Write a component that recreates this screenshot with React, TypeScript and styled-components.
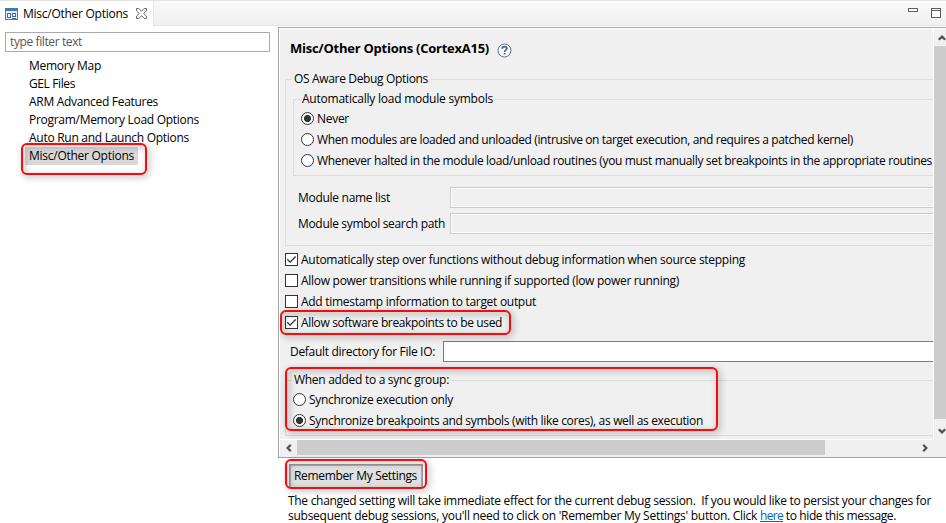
import React, { useLayoutEffect, useRef } from 'react';
import styled, { createGlobalStyle } from 'styled-components';

const GlobalStyle = createGlobalStyle`
  * { box-sizing: border-box; }
  body {
    margin: 0;
    background: #fff;
    color: #000;
    overflow: hidden;
    font: 12px/18px 'Open Sans', 'Noto Sans', sans-serif;
  }
`;

/* ---------- text ---------- */

const TextSpan = styled.span<{ $width: number; $tone?: string }>`
  display: inline-block;
  flex: none;
  width: ${(p) => p.$width}px;
  white-space: pre;
  color: ${(p) => p.$tone ?? 'inherit'};
`;

/* Tracks its glyphs so that the label fills exactly the given advance width. */
function Text({ width, tone, children }: { width: number; tone?: string; children: string }) {
  const ref = useRef<HTMLSpanElement>(null);
  useLayoutEffect(() => {
    const el = ref.current;
    if (!el) return;
    el.style.letterSpacing = '0px';
    const range = document.createRange();
    range.selectNodeContents(el);
    const natural = range.getBoundingClientRect().width;
    el.style.letterSpacing = `${(width - natural) / children.length}px`;
  }, [width, children]);
  return (
    <TextSpan ref={ref} $width={width} $tone={tone}>
      {children}
    </TextSpan>
  );
}

/* ---------- window frame ---------- */

const Window = styled.div`
  width: 946px;
  height: 523px;
  display: flex;
  flex-direction: column;
  overflow: hidden;
  background: #fff;
`;

const TabBar = styled.header`
  flex: none;
  height: 26px;
  display: flex;
  border-top: 1px solid #e4e4e4;
`;

const Tab = styled.div`
  width: 153px;
  display: flex;
  align-items: center;
  padding: 0 0 0 5px;
  background: #fff;
  svg { flex: none; display: block; }
`;

const TabLabel = styled.div`
  margin: 0 8px 0 5px;
`;

const TabFill = styled.div`
  flex: 1;
  display: flex;
  justify-content: flex-end;
  align-items: flex-start;
  gap: 12px;
  padding: 6px 4px 0 0;
  border-left: 1px solid #e4e4e4;
  border-bottom: 1px solid #e4e4e4;
  background: linear-gradient(#fafafa, #f0f0f0);
`;

const Body = styled.div`
  flex: 1;
  display: flex;
  min-height: 0;
`;

/* ---------- sidebar ---------- */

const Sidebar = styled.aside`
  flex: none;
  width: 278px;
  padding: 6px 0 0 5px;
`;

const FilterBox = styled.div`
  width: 265px;
  height: 20px;
  padding-left: 4px;
  border: 1px solid #a9a9ae;
  display: flex;
  align-items: center;
`;

const Tree = styled.ul`
  list-style: none;
  margin: 5px 0 0 20px;
  padding: 0;
`;

const TreeItem = styled.li<{ $selected?: boolean }>`
  position: relative;
  width: max-content;
  height: 18px;
  padding: 0 4px;
  background: ${(p) => (p.$selected ? '#d9d9d9' : 'transparent')};
`;

const Callout = styled.div<{ $left: number; $top: number; $width: number; $height: number }>`
  position: absolute;
  z-index: 2;
  left: ${(p) => p.$left}px;
  top: ${(p) => p.$top}px;
  width: ${(p) => p.$width}px;
  height: ${(p) => p.$height}px;
  border: 2px solid #fa0a0a;
  border-radius: 6px;
  filter: drop-shadow(2px 2px 3px rgba(0, 0, 0, 0.45));
  pointer-events: none;
`;

/* ---------- main column ---------- */

const Main = styled.main`
  flex: 1;
  min-width: 0;
  padding-top: 1px;
`;

const Panel = styled.section`
  height: 431px;
  border: 1px solid #a3a3a7;
  border-right: 0;
  display: grid;
  grid-template: 411px 16px / 655px 12px;
  background: #f0f0f0;
  padding-bottom: 2px;
`;

const Viewport = styled.div`
  overflow: hidden;
  border: 1px solid #fff;
  border-width: 1px 1px 0 1px;
`;

const Form = styled.div`
  width: 760px;
  padding-left: 5px;
`;

const TitleRow = styled.h1`
  margin: 0;
  height: 41px;
  display: flex;
  padding: 10px 0 0 5px;
  font-size: 13px;
  font-weight: 700;
  svg { margin: 4px 0 0 8px; }
`;

const Group = styled.fieldset<{ $height: number; $gap?: number }>`
  min-width: 0;
  width: 740px;
  height: ${(p) => p.$height}px;
  margin: ${(p) => p.$gap ?? 0}px 0 0;
  padding: 0 0 0 7px;
  border: 1px solid #dcdcdc;
`;

const GroupLabel = styled.legend`
  margin-left: -1px;
  padding: 0 2px;
  height: 18px;
`;

const OptionRow = styled.div`
  position: relative;
  height: 21px;
  display: flex;
  align-items: center;
`;

const OptionList = styled.div<{ $top: number }>`
  margin-top: ${(p) => p.$top}px;
`;

const RadioDot = styled.span<{ $on?: boolean }>`
  flex: none;
  width: 13px;
  height: 13px;
  margin-right: 3px;
  border: 1px solid #333;
  border-radius: 50%;
  background: ${(p) => (p.$on ? 'radial-gradient(circle, #333 3.2px, #fff 3.9px)' : '#fff')};
`;

const Box = styled.span`
  flex: none;
  width: 13px;
  height: 13px;
  margin-right: 3px;
  border: 1px solid #333;
  background: #fff;
  svg { display: block; }
`;

const FieldRow = styled.div<{ $gap: number; $indent: number }>`
  height: 21px;
  margin-top: ${(p) => p.$gap}px;
  padding-left: ${(p) => p.$indent}px;
  display: flex;
  align-items: center;
`;

const FieldLabel = styled.div<{ $width: number }>`
  flex: none;
  width: ${(p) => p.$width}px;
`;

const FieldInput = styled.div<{ $disabled?: boolean }>`
  flex: 1;
  height: 21px;
  border: 1px solid ${(p) => (p.$disabled ? '#cbcbcb' : '#7a7a7a')};
  background: ${(p) => (p.$disabled ? '#f0f0f0' : '#fff')};
  box-shadow: inset 0 0 0 1px #fff;
`;

const SyncArea = styled.div`
  position: relative;
  margin-top: 9px;
`;

/* ---------- scroll bars ---------- */

const VScroll = styled.div`
  height: 414px;
  display: flex;
  flex-direction: column;
  border-top: 1px solid #fff;
`;

const HScroll = styled.div`
  display: flex;
  width: 654px;
  border-top: 1px solid #fff;
  border-left: 1px solid #fff;
`;

const ScrollArrow = styled.div<{ $w: number; $h: number }>`
  flex: none;
  width: ${(p) => p.$w}px;
  height: ${(p) => p.$h}px;
  display: flex;
  align-items: center;
  justify-content: center;
  svg { flex: none; }
`;

const VThumb = styled.div`
  flex: none;
  height: 373px;
  background: #cdcdcd;
`;

const HThumb = styled.div`
  width: 528px;
  height: 15px;
  margin-right: auto;
  background: #cdcdcd;
`;

/* ---------- footer ---------- */

const Footer = styled.footer`
  padding: 6px 0 0 10px;
`;

const ButtonWrap = styled.div`
  position: relative;
  width: 136px;
  height: 23px;
  margin-left: 1px;
`;

const Button = styled.button`
  display: flex;
  width: 134px;
  height: 23px;
  padding: 2px 0 0 4px;
  border: 1px solid #9b9b9b;
  border-bottom: 0;
  border-radius: 0;
  background: #e1e1e1;
  box-shadow: inset 1px 1px 0 #adadad, inset -1px 0 0 #adadad;
  color: #000;
  font: inherit;
`;

const Message = styled.div`
  margin-top: 6px;
  line-height: 15px;
`;

const MessageLine = styled.div`
  display: flex;
  height: 15px;
`;

const Link = styled.a`
  color: #0066cc;
  display: flex;
  text-decoration: none;
  height: 14px;
  border-bottom: 1px solid #0066cc;
`;

/* ---------- drawings ---------- */

const TabIcon = () => (
  <svg width="13" height="12" shapeRendering="crispEdges">
    <rect width="13" height="12" fill="#4a78b0" />
    <rect x="1" y="1" width="11" height="2" fill="#3f78bd" />
    <rect x="1" y="3" width="11" height="8" fill="#e4effa" />
    <path d="M2.5 5.5h3v4h-3zM7.5 5.5h3v3h-3zM7 10.5h4" fill="#fff" stroke="#3c6aa3" />
  </svg>
);

const CloseIcon = () => (
  <svg width="11" height="11" viewBox="0 0 11 11">
    <path
      d="M.5.5h2.3l2.7 2.8L8.2.5h2.3v2.3L7.7 5.5l2.8 2.7v2.3H8.2L5.5 7.7l-2.7 2.8H.5V8.2l2.8-2.7L.5 2.8z"
      fill="#fff"
      stroke="#666"
    />
  </svg>
);

const HelpIcon = () => (
  <svg width="15" height="15" viewBox="0 0 15 15">
    <circle cx="7.5" cy="7.5" r="6.5" fill="#fbfcfe" stroke="#5b6f92" />
    <path
      d="M5.2 5.8C5.2 4.3 6.1 3.7 7.5 3.7s2.3.7 2.3 1.9c0 1.6-2.2 1.5-2.2 3.3M7.6 10v1.6"
      fill="none"
      stroke="#4a5f88"
      strokeWidth="1.8"
    />
  </svg>
);

const MinimizeIcon = () => (
  <svg width="11" height="11" shapeRendering="crispEdges">
    <rect x=".5" y="1.5" width="9" height="3" fill="#fff" stroke="#5f5f5f" />
  </svg>
);

const MaximizeIcon = () => (
  <svg width="11" height="11" shapeRendering="crispEdges">
    <path d="M.5 1.5h9v9h-9zM.5 3.5h9" fill="#fff" stroke="#5f5f5f" />
  </svg>
);

const CHEVRONS = {
  up: 'M.8 5.8L4 2.6l3.2 3.2',
  down: 'M.8 2.2L4 5.4l3.2-3.2',
  left: 'M5.8.8L2.6 4l3.2 3.2',
  right: 'M2.2.8L5.4 4 2.2 7.2',
};

const Chevron = ({ dir }: { dir: keyof typeof CHEVRONS }) => (
  <svg width="8" height="8" viewBox="0 0 8 8">
    <path d={CHEVRONS[dir]} fill="none" stroke="#505050" strokeWidth="2.2" />
  </svg>
);

/* ---------- composed controls ---------- */

type OptionProps = { on?: boolean; width: number; label: string; children?: React.ReactNode };

const Radio = ({ on, width, label }: OptionProps) => (
  <OptionRow>
    <RadioDot $on={on} />
    <Text width={width}>{label}</Text>
  </OptionRow>
);

const Checkbox = ({ on, width, label, children }: OptionProps) => (
  <OptionRow>
    <Box>
      {on && (
        <svg width="11" height="11" viewBox="0 0 11 11">
          <path d="M1.3 5.3l2.8 2.8 5.5-5.6" fill="none" stroke="#333" strokeWidth="1.3" />
        </svg>
      )}
    </Box>
    <Text width={width}>{label}</Text>
    {children}
  </OptionRow>
);

const PAGES: [string, number][] = [
  ['Memory Map', 72],
  ['GEL Files', 46],
  ['ARM Advanced Features', 129],
  ['Program/Memory Load Options', 170],
  ['Auto Run and Launch Options', 160],
];

export default function App() {
  return (
    <Window>
      <GlobalStyle />
      <TabBar>
        <Tab>
          <TabIcon />
          <TabLabel>
            <Text width={105}>Misc/Other Options</Text>
          </TabLabel>
          <CloseIcon />
        </Tab>
        <TabFill>
          <MinimizeIcon />
          <MaximizeIcon />
        </TabFill>
      </TabBar>
      <Body>
        <Sidebar>
          <FilterBox>
            <Text width={72} tone="#555">type filter text</Text>
          </FilterBox>
          <Tree>
            {PAGES.map(([label, width]) => (
              <TreeItem key={label}>
                <Text width={width}>{label}</Text>
              </TreeItem>
            ))}
            <TreeItem $selected>
              <Text width={105}>Misc/Other Options</Text>
              <Callout $left={-4} $top={-4} $width={126} $height={32} />
            </TreeItem>
          </Tree>
        </Sidebar>
        <Main>
          <Panel>
            <Viewport>
              <Form>
                <TitleRow>
                  <Text width={199}>Misc/Other Options (CortexA15)</Text>
                  <HelpIcon />
                </TitleRow>
                <Group $height={176}>
                  <GroupLabel>
                    <Text width={134}>OS Aware Debug Options</Text>
                  </GroupLabel>
                  <Group $height={86} $gap={2}>
                    <GroupLabel>
                      <Text width={191}>Automatically load module symbols</Text>
                    </GroupLabel>
                    <Radio on width={32} label="Never" />
                    <Radio
                      width={536}
                      label="When modules are loaded and unloaded (intrusive on target execution, and requires a patched kernel)"
                    />
                    <Radio
                      width={615}
                      label="Whenever halted in the module load/unload routines (you must manually set breakpoints in the appropriate routines"
                    />
                  </Group>
                  <FieldRow $gap={11} $indent={5}>
                    <FieldLabel $width={152}>
                      <Text width={92}>Module name list</Text>
                    </FieldLabel>
                    <FieldInput $disabled />
                  </FieldRow>
                  <FieldRow $gap={5} $indent={5}>
                    <FieldLabel $width={152}>
                      <Text width={147}>Module symbol search path</Text>
                    </FieldLabel>
                    <FieldInput $disabled />
                  </FieldRow>
                </Group>
                <OptionList $top={3}>
                  <Checkbox
                    on
                    width={444}
                    label="Automatically step over functions without debug information when source stepping"
                  />
                  <Checkbox
                    width={378}
                    label="Allow power transitions while running if supported (low power running)"
                  />
                  <Checkbox width={235} label="Add timestamp information to target output" />
                  <Checkbox on width={201} label="Allow software breakpoints to be used">
                    <Callout $left={-5} $top={-2} $width={231} $height={25} />
                  </Checkbox>
                </OptionList>
                <FieldRow $gap={8} $indent={5}>
                  <FieldLabel $width={153}>
                    <Text width={145}>Default directory for File IO:</Text>
                  </FieldLabel>
                  <FieldInput />
                </FieldRow>
                <SyncArea>
                  <Group $height={65}>
                    <GroupLabel>
                      <Text width={155}>When added to a sync group:</Text>
                    </GroupLabel>
                    <Radio width={144} label="Synchronize execution only" />
                    <Radio
                      on
                      width={394}
                      label="Synchronize breakpoints and symbols (with like cores), as well as execution"
                    />
                  </Group>
                  <Callout $left={0} $top={-4} $width={433} $height={64} />
                </SyncArea>
              </Form>
            </Viewport>
            <VScroll>
              <ScrollArrow $w={15} $h={17}>
                <Chevron dir="up" />
              </ScrollArrow>
              <VThumb />
              <ScrollArrow $w={15} $h={23}>
                <Chevron dir="down" />
              </ScrollArrow>
            </VScroll>
            <HScroll>
              <ScrollArrow $w={17} $h={15}>
                <Chevron dir="left" />
              </ScrollArrow>
              <HThumb />
              <ScrollArrow $w={17} $h={15}>
                <Chevron dir="right" />
              </ScrollArrow>
            </HScroll>
          </Panel>
          <Footer>
            <ButtonWrap>
              <Button type="button">
                <Text width={123}>Remember My Settings</Text>
              </Button>
              <Callout $left={-4} $top={-5} $width={142} $height={30} />
            </ButtonWrap>
            <Message>
              <MessageLine>
                <Text width={643}>
                  {'The changed setting will take immediate effect for the current debug session.  If you would like to persist your changes for'}
                </Text>
              </MessageLine>
              <MessageLine>
                <Text width={472}>
                  {"subsequent debug sessions, you'll need to click on 'Remember My Settings' button. Click "}
                </Text>
                <Link>
                  <Text width={23}>here</Text>
                </Link>
                <Text width={113}>{' to hide this message.'}</Text>
              </MessageLine>
            </Message>
          </Footer>
        </Main>
      </Body>
    </Window>
  );
}
